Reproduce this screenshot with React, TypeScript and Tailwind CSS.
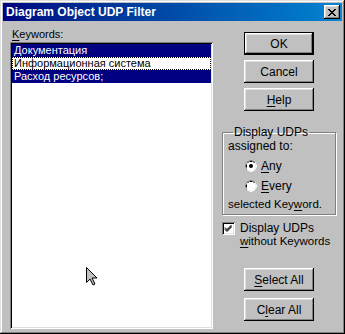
import React from 'react'

const font = "font-['Liberation_Sans',Arial,sans-serif]"
const raised =
  'bg-[#c0c0c0] shadow-[inset_-1px_-1px_#000,inset_1px_1px_#fff,inset_-2px_-2px_#808080,inset_2px_2px_#dfdfdf]'
const sunken =
  'bg-white shadow-[inset_1px_1px_#808080,inset_-1px_-1px_#fff,inset_2px_2px_#000,inset_-2px_-2px_#dfdfdf]'

const U = ({ children }: { children: React.ReactNode }) => (
  <span className="underline underline-offset-2 decoration-1">{children}</span>
)

function Button({ children, isDefault }: { children: React.ReactNode; isDefault?: boolean }) {
  if (isDefault) {
    return (
      <div className="mx-auto w-[70px] h-[23px] border border-black">
        <div className={`w-full h-full flex items-center justify-center text-[12px] text-black ${raised}`}>
          {children}
        </div>
      </div>
    )
  }
  return (
    <div className={`mx-auto w-[70px] h-[23px] flex items-center justify-center text-[12px] text-black ${raised}`}>
      {children}
    </div>
  )
}

function Radio({ checked }: { checked?: boolean }) {
  return (
    <svg width="12" height="12" viewBox="0 0 12 12" className="shrink-0">
      <circle cx="6" cy="6" r="5" fill="#fff" />
      <path d="M4.5 0.5h3M2.5 1.5h1.5M8 1.5h1.5M1.5 2.5v1M0.5 4.5v3M1.5 8.5v1" stroke="#808080" />
      <path d="M4.5 1.5h3M2.5 2.5h1M8.5 2.5h1M1.5 4.5v3" stroke="#000" />
      <path d="M11.5 4.5v3M10.5 8.5v1M8 10.5h1.5M2.5 10.5h1.5M4.5 11.5h3M10.5 2.5v1" stroke="#fff" />
      {checked && <circle cx="6" cy="6" r="2" fill="#000" />}
    </svg>
  )
}

function Checkbox() {
  return (
    <div className={`w-[13px] h-[13px] shrink-0 ${sunken}`}>
      <svg width="13" height="13" viewBox="0 0 13 13">
        <path d="M3 5.5l2 2 4.5-4.5M3 6.5l2 2 4.5-4.5M3 7.5l2 2 4.5-4.5" stroke="#000" fill="none" />
      </svg>
    </div>
  )
}

export default function App() {
  return (
    <div
      className={`relative w-[345px] h-[334px] p-[3px] bg-[#c0c0c0] text-[11px] text-black ${font} shadow-[inset_-1px_-1px_#000,inset_1px_1px_#dfdfdf,inset_-2px_-2px_#808080,inset_2px_2px_#fff]`}
    >
      {/* Title bar */}
      <div className="h-[18px] flex items-center justify-between pl-[3px] pr-[2px] bg-gradient-to-r from-[#000080] to-[#1084d0]">
        <span className="text-white font-bold text-[12px] leading-none">Diagram Object UDP Filter</span>
        <div className={`w-[16px] h-[14px] flex items-center justify-center ${raised}`}>
          <svg width="8" height="7" viewBox="0 0 8 7">
            <path d="M0 0h2v1h1v1h2V1h1V0h2v1H7v1H6v1H5v1h1v1h1v1h1v1H6V6H5V5H3v1H2v1H0V6h1V5h1V4h1V3H2V2H1V1H0z" fill="#000" />
          </svg>
        </div>
      </div>

      {/* Body */}
      <div className="flex gap-[9px] pl-[7px]">
        <div className="w-[203px] pt-[7px]">
          <div className="leading-[13px] mb-[1px] pl-[2px]">
            <U>K</U>eywords:
          </div>
          <div className={`h-[287px] p-[2px] ${sunken}`}>
            <div className="h-[13px] leading-[13px] pl-[2px] bg-[#000080] text-white">Документация</div>
            <div className="h-[13px] leading-[11px] pl-[1px] border border-dotted border-black bg-white text-black">
              Информационная система
            </div>
            <div className="h-[13px] leading-[13px] pl-[2px] bg-[#000080] text-white">Расход ресурсов;</div>
          </div>
        </div>

        <div className="w-[114px] pt-[11px] flex flex-col">
          <div className="flex flex-col gap-[5px]">
            <Button isDefault>OK</Button>
            <Button>Cancel</Button>
            <Button>
              <U>H</U>elp
            </Button>
          </div>

          <fieldset className="mt-[15px] h-[89px] border border-[#808080] shadow-[inset_1px_1px_#fff,1px_1px_#fff] pl-[5px] leading-[13px]">
            <legend className="ml-[5px] px-[1px] text-[12px]">Display UDPs</legend>
            <div className="mt-[1px] text-[12px]">assigned to:</div>
            <div className="flex items-center gap-[4px] pl-[17px] mt-[6px] h-[14px] text-[12px]">
              <Radio checked />
              <span>
                <U>A</U>ny
              </span>
            </div>
            <div className="flex items-center gap-[4px] pl-[17px] mt-[6px] h-[14px] text-[12px]">
              <Radio />
              <span>
                <U>E</U>very
              </span>
            </div>
            <div className="mt-[5px] text-[11.5px]">
              selected Key<U>w</U>ord.
            </div>
          </fieldset>

          <div className="flex gap-[5px] mt-[7px] leading-[13px] text-[12px]">
            <Checkbox />
            <div>
              <div>Display UDPs</div>
              <div className="text-[11.5px]">
                <U>w</U>ithout Keywords
              </div>
            </div>
          </div>

          <div className="flex flex-col gap-[7px] mt-[20px]">
            <Button>
              <U>S</U>elect All
            </Button>
            <Button>
              C<U>l</U>ear All
            </Button>
          </div>
        </div>
      </div>

      {/* mouse pointer */}
      <svg className="absolute left-[86px] top-[267px]" width="12" height="19" viewBox="0 0 12 19">
        <path d="M0.5 0.5v15l3.5-3.5 3 6 2-1-3-6h5z" fill="#c0c0c0" stroke="#000" />
      </svg>
    </div>
  )
}
